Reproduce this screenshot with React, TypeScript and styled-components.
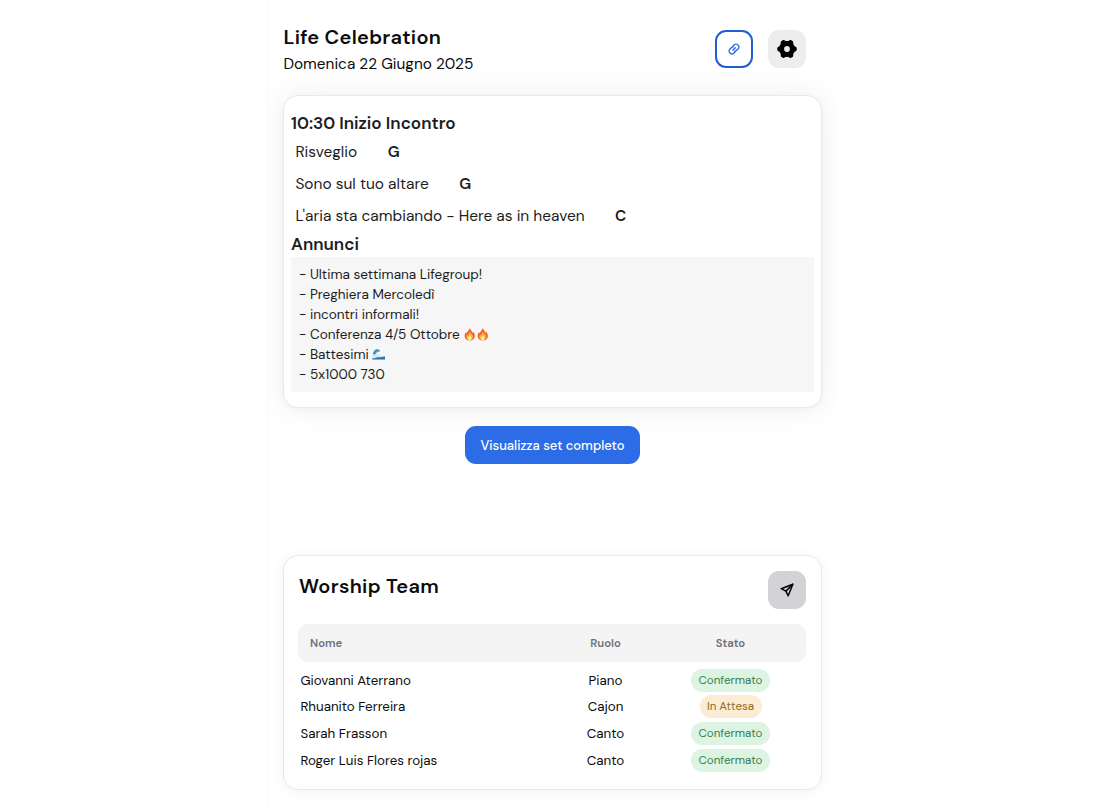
import React from "react";
import styled, { createGlobalStyle } from "styled-components";

const Global = createGlobalStyle`
  * { box-sizing: border-box; }
  html, body { margin: 0; height: 100%; background: #fff; }
  body { font-family: "DM Sans", Inter, "Liberation Sans", sans-serif; color: #0b0b0c; overflow: hidden; }
  h1, h2, h3, p { margin: 0; }
`;

const Page = styled.main`
  width: 570px;
  height: 808px;
  margin-left: 267px;
  padding: 24px 14px 0 15px;
  border-left: 1px solid #f8f8f9;
  border-right: 1px solid #fdfdfd;
  overflow: hidden;
`;

const Label = styled.span`
  white-space: nowrap;
`;

const Header = styled.header`
  display: flex;
  justify-content: space-between;
  height: 71px;
  padding: 0 16px 0 0.4px;
`;

const Title = styled.h1`
  font-size: 20px;
  line-height: 27px;
  font-weight: 600;
  letter-spacing: 0.28px;
`;

const DateLine = styled.p`
  font-size: 15.4px;
  line-height: 27.5px;
`;

const Actions = styled.div`
  display: flex;
  gap: 15px;
  padding-top: 6px;
`;

const IconButton = styled.button<{ $tone: "outline" | "soft" | "grey" }>`
  display: flex;
  align-items: center;
  justify-content: center;
  flex: none;
  width: 38px;
  height: 38px;
  padding: 0;
  border-radius: 11px;
  color: ${(p) => (p.$tone === "outline" ? "#1f5fd6" : "#000")};
  border: ${(p) => (p.$tone === "outline" ? "2px solid #1f5fd6" : "0")};
  background: ${(p) => ({ outline: "#fff", soft: "#ededee", grey: "#d3d3d7" })[p.$tone]};
`;

const SetCard = styled.section`
  height: 313px;
  padding: 15px 7px;
  border: 1px solid #e9e9ea;
  border-radius: 15px;
  background: #fff;
  color: #1c1c1e;
  box-shadow: 0 0 30px rgba(0, 0, 0, 0.07), 0 2px 6px rgba(0, 0, 0, 0.03);
`;

const SectionTitle = styled.h3`
  font-size: 17.1px;
  line-height: 25px;
  font-weight: 600;
`;

const Song = styled.div`
  display: flex;
  align-items: center;
  gap: 30.5px;
  height: 32px;
  padding-left: 4.4px;
  font-size: 15.47px;
`;

const Key = styled.b`
  font-weight: 650;
`;

const Notes = styled.div`
  height: 135px;
  padding: 7px 8px;
  background: #f6f6f6;
  font-size: 13.55px;
`;

const Note = styled.div`
  display: flex;
  align-items: center;
  height: 20px;
`;

const ButtonRow = styled.div`
  display: flex;
  justify-content: center;
  height: 147px;
  padding-top: 18px;
`;

const PrimaryButton = styled.button`
  width: 175px;
  height: 38px;
  padding: 0;
  border: 0;
  border-radius: 11px;
  background: #2c6ce6;
  color: #fff;
  font: 500 13px "DM Sans", Inter, sans-serif;
`;

const TeamCard = styled.section`
  height: 235px;
  padding: 15px 15px 15px 14px;
  border: 1px solid #e9e9ea;
  border-radius: 15px;
  background: #fff;
  box-shadow: 0 2px 14px rgba(0, 0, 0, 0.05);
`;

const TeamHeader = styled.div`
  display: flex;
  justify-content: space-between;
  height: 53px;
`;

const TeamTitle = styled.h2`
  padding-left: 1px;
  font-size: 20px;
  line-height: 30px;
  font-weight: 600;
  letter-spacing: 0.3px;
`;

const Row = styled.div`
  display: grid;
  grid-template-columns: 258px 99px 151px;
  align-items: center;
  justify-items: center;
  height: 26.6px;
  font-size: 13.35px;

  & > :first-child { justify-self: start; padding-left: 2.4px; }
`;

const HeadRow = styled(Row)`
  height: 38px;
  margin-bottom: 5px;
  border-radius: 9px;
  background: #f4f4f5;
  color: #707078;
  font-size: 11.35px;
  font-weight: 600;

  & > :first-child { padding-left: 12px; }
`;

const Status = styled.span<{ $waiting: boolean }>`
  display: flex;
  align-items: center;
  justify-content: center;
  width: ${(p) => (p.$waiting ? 62 : 79)}px;
  height: 23px;
  border-radius: 12px;
  background: ${(p) => (p.$waiting ? "#fbecd5" : "#dcf4e1")};
  color: ${(p) => (p.$waiting ? "#926a27" : "#397e50")};
  font-size: 11.55px;
`;

const Emoji = styled.svg`
  width: 13.3px;
  height: 14px;
  flex: none;
`;

const Icons = styled.span`
  display: flex;
  padding-left: 2.8px;
`;

const LinkIcon = () => (
  <svg width="12" height="12" viewBox="0 0 24 24" fill="none" stroke="currentColor" strokeWidth="2.3" strokeLinecap="round">
    <path d="M9.500 14.500 14.500 9.500" />
    <path d="M9.500 6.500 12 4a5.500 5.500 0 0 1 8 8L17.500 14.500a5.500 5.500 0 0 1-4 1.800" />
    <path d="M14.500 17.500 12 20A5.500 5.500 0 0 1 4 12L6.500 9.500A5.500 5.500 0 0 1 10.500 7.700" />
  </svg>
);

const GearIcon = () => (
  <svg width="20" height="20" viewBox="0 0 20 20">
    <g fill="currentColor">
      <circle cx="10" cy="10" r="8" />
      {[0, 60, 120, 180, 240, 300].map((a) => (
        <path key={a} d="M14 6 17 7c1.700.6 2.700 1.200 2.700 2.200v1.600c0 1-1 1.600-2.700 2.200L14 14Z" transform={`rotate(${a} 10 10)`} />
      ))}
    </g>
    <circle cx="10" cy="10" r="2.900" fill="#ededee" />
  </svg>
);

const SendIcon = () => (
  <svg width="14" height="14" viewBox="0 0 14 14" fill="none" stroke="currentColor" strokeWidth="1.500" strokeLinejoin="round" strokeLinecap="round">
    <path d="M12.800 1.200 1.200 5.700 5.900 8.100 8.200 12.800Z" />
    <path d="M5.900 8.100 12.800 1.200" />
  </svg>
);

const Fire = () => (
  <Emoji viewBox="0 0 14 14" role="img" aria-label="fire">
    <path d="M7 .5c.5 2.500 3 3.500 3.200 5.500.5-.4.600-1 .6-1.500 1.200 1.600 1.700 3 1.700 4.500 0 3-2.200 4.700-5.300 4.700S1.800 12 1.800 9c0-1.800.7-3 1.300-4 .2.900.5 1.300.9 1.600C4 4 6.800 3.500 7 .5Z" fill="#f0652f" />
    <path d="M7.300 4c.2 2.200 3.200 3.300 3.200 6 0 2.100-1.500 3.500-3.400 3.500S3.600 12.200 3.600 10.200c0-1.200.6-2 1.100-2.600.1.700.4 1 .8 1.200C5.400 7.200 7.300 6 7.300 4Z" fill="#ffb83a" />
    <path d="M7.200 8c.2 1.200 1.700 1.900 1.700 3.400 0 1.200-.8 2-1.800 2s-1.900-.8-1.900-1.900C5.200 10.100 7 9.600 7.200 8Z" fill="#fff0a0" />
  </Emoji>
);

const Wave = () => (
  <Emoji viewBox="0 0 14 14" role="img" aria-label="wave">
    <path d="M.4 12.800V6.500C1 3.500 3 1.800 5.500 2c2 .2 3 1.300 3 2.600C7.200 4 6 4.800 6 6.500 6 8.700 8.500 9.600 13.700 9.400v3.400Z" fill="#d3eaf5" />
    <path d="M1 7C1.600 3.800 3.300 2.100 5.500 2c2 .2 3 1.300 3 2.600C6.800 4 5 4.600 4.200 6.200 3.300 7.500 2 7.800 1 7Z" fill="#3e8fc2" />
    <path d="M.4 12.800v-1.500c2.600.8 3.800-.8 5.800-.9 2.300 0 4 .1 7.500-1v3.400Z" fill="#2b75b3" />
  </Emoji>
);

const songs = [
  { title: "Risveglio", key: "G" },
  { title: "Sono sul tuo altare", key: "G" },
  { title: "L'aria sta cambiando - Here as in heaven", key: "C" },
];

const notes = [
  { text: "- Ultima settimana Lifegroup!" },
  { text: "- Preghiera Mercoledì" },
  { text: "- incontri informali!" },
  { text: "- Conferenza 4/5 Ottobre", icons: <><Fire /><Fire /></> },
  { text: "- Battesimi", icons: <Wave /> },
  { text: "- 5x1000 730" },
];

const team = [
  { name: "Giovanni Aterrano", role: "Piano", status: "Confermato" },
  { name: "Rhuanito Ferreira", role: "Cajon", status: "In Attesa" },
  { name: "Sarah Frasson", role: "Canto", status: "Confermato" },
  { name: "Roger Luis Flores rojas", role: "Canto", status: "Confermato" },
];

export default function App() {
  return (
    <>
      <Global />
      <Page>
        <Header>
          <div>
            <Title>Life Celebration</Title>
            <DateLine>Domenica 22 Giugno 2025</DateLine>
          </div>
          <Actions>
            <IconButton $tone="outline" aria-label="Link"><LinkIcon /></IconButton>
            <IconButton $tone="soft" aria-label="Impostazioni"><GearIcon /></IconButton>
          </Actions>
        </Header>
        <SetCard>
          <SectionTitle>10:30 Inizio Incontro</SectionTitle>
          {songs.map((s) => (
            <Song key={s.title}>
              <Label>{s.title}</Label>
              <Key>{s.key}</Key>
            </Song>
          ))}
          <SectionTitle>Annunci</SectionTitle>
          <Notes>
            {notes.map((n) => (
              <Note key={n.text}>
                <Label>{n.text}</Label>
                {n.icons && <Icons>{n.icons}</Icons>}
              </Note>
            ))}
          </Notes>
        </SetCard>
        <ButtonRow>
          <PrimaryButton>Visualizza set completo</PrimaryButton>
        </ButtonRow>
        <TeamCard>
          <TeamHeader>
            <TeamTitle>Worship Team</TeamTitle>
            <IconButton $tone="grey" aria-label="Invia"><SendIcon /></IconButton>
          </TeamHeader>
          <HeadRow>
            <Label>Nome</Label>
            <Label>Ruolo</Label>
            <Label>Stato</Label>
          </HeadRow>
          {team.map((m) => (
            <Row key={m.name}>
              <Label>{m.name}</Label>
              <Label>{m.role}</Label>
              <Status $waiting={m.status === "In Attesa"}>{m.status}</Status>
            </Row>
          ))}
        </TeamCard>
      </Page>
    </>
  );
}
